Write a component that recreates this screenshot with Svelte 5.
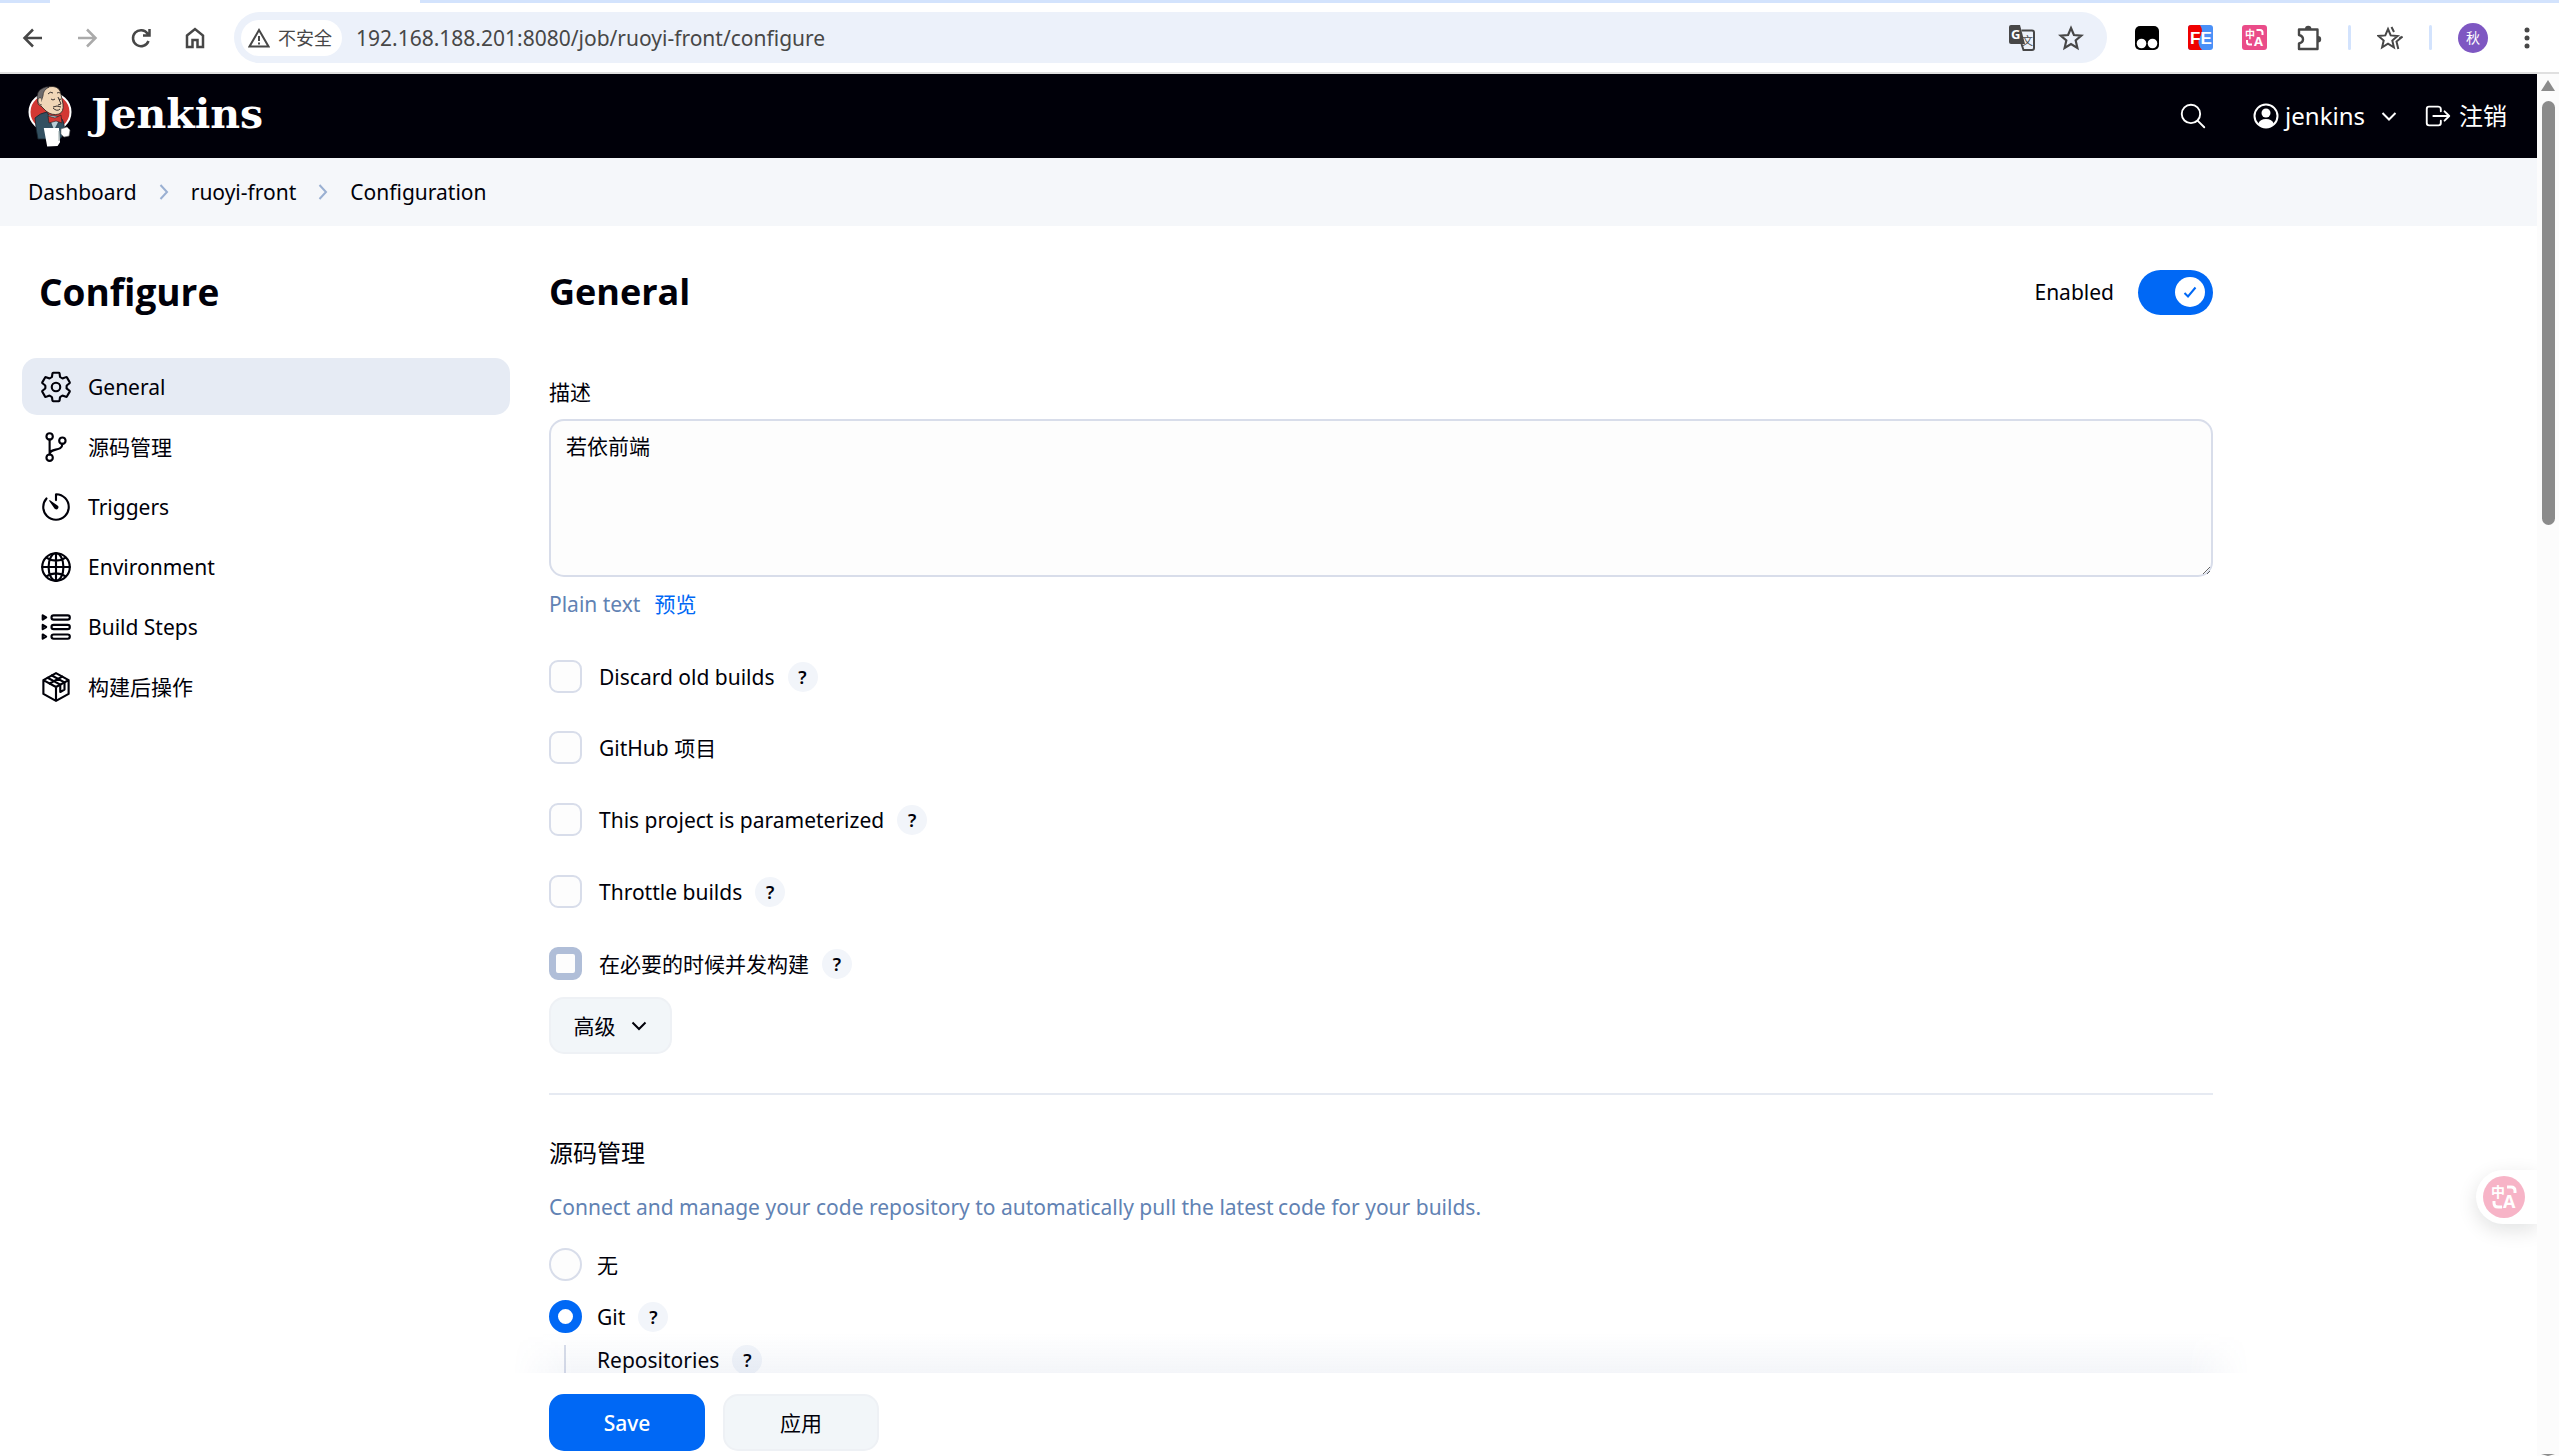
<script lang="ts">
	let url = '192.168.188.201:8080/job/ruoyi-front/configure';
	let description = '若依前端';
	let enabled = true;
	let scm = 'git';

	const crumbs = ['Dashboard', 'ruoyi-front', 'Configuration'];

	const tasks = [
		{ name: 'General', icon: 'settings', active: true },
		{ name: '源码管理', icon: 'branch' },
		{ name: 'Triggers', icon: 'timer' },
		{ name: 'Environment', icon: 'globe' },
		{ name: 'Build Steps', icon: 'steps' },
		{ name: '构建后操作', icon: 'cube' }
	];

	const options = [
		{ id: 'discard', label: 'Discard old builds', help: true },
		{ id: 'github', label: 'GitHub 项目' },
		{ id: 'parameterized', label: 'This project is parameterized', help: true },
		{ id: 'throttle', label: 'Throttle builds', help: true },
		{ id: 'concurrent', label: '在必要的时候并发构建', help: true, pressed: true }
	];
</script>

<div class="window">
	<div class="tab-strip"><div class="tab"></div></div>

	<div class="toolbar">
		<div class="nav-buttons">
			<button aria-label="Back">
				<svg width="24" height="24" viewBox="0 0 24 24"><path d="M21 12H4M12 3.500L3.500 12l8.500 8.500" /></svg>
			</button>
			<button aria-label="Forward" class="faded">
				<svg width="24" height="24" viewBox="0 0 24 24"><path d="M3 12h17M12 3.500l8.500 8.500-8.500 8.500" /></svg>
			</button>
			<button aria-label="Reload">
				<svg width="24" height="24" viewBox="0 0 24 24"><path d="M19.500 15A8 8 0 1 1 18.500 7.500L20 9M20.500 3v6.500H14" /></svg>
			</button>
			<button aria-label="Home">
				<svg width="24" height="24" viewBox="0 0 24 24"><path d="M4 9.500L12 3l8 6.500V21h-5.500v-7h-5v7H4z" /></svg>
			</button>
		</div>

		<div class="omnibox">
			<button class="chip">
				<svg width="22" height="22" viewBox="0 0 22 22"><path d="M11 3L1.500 19.500h19zM11 9v5M11 15.500v2" /></svg>
				不安全
			</button>
			<input class="url" aria-label="Address" bind:value={url} />
			<button aria-label="Translate">
				<svg class="solid" width="26" height="26" viewBox="0 0 26 26">
					<path d="M2 0h9l5 19H2a2 2 0 0 1-2-2V2a2 2 0 0 1 2-2z" />
					<path class="line" d="M12.500 5.500H23a2 2 0 0 1 2 2V23a2 2 0 0 1-2 2h-8.500l-2-6" />
					<text x="2" y="14" class="g">G</text>
					<text x="13" y="20" class="wen">文</text>
				</svg>
			</button>
			<button aria-label="Bookmark">
				<svg width="26" height="26" viewBox="0 0 24 24"><path d="M12 2.800l2.700 6.400 6.900.6-5.300 4.500 1.600 6.800-5.900-3.600-5.900 3.600 1.600-6.800L2.400 9.800l6.900-.6z" /></svg>
			</button>
		</div>

		<div class="extensions">
			<button aria-label="Tampermonkey">
				<svg class="plain" width="24" height="24" viewBox="0 0 24 24">
					<rect width="24" height="24" rx="5" fill="#000" />
					<circle cx="6.500" cy="17.500" r="4.800" fill="#fff" />
					<circle cx="17.500" cy="17.500" r="4.800" fill="#fff" />
				</svg>
			</button>
			<button aria-label="FeHelper">
				<svg class="plain" width="25" height="25" viewBox="0 0 25 25">
					<rect width="25" height="25" rx="3" fill="#4a90f7" />
					<path d="M3 0h9q4 6 0 12t2 13H3a3 3 0 0 1-3-3V3a3 3 0 0 1 3-3z" fill="#f00000" />
					<text x="2" y="19" class="fe">FE</text>
				</svg>
			</button>
			<button aria-label="Immersive translate">
				<svg class="plain" width="25" height="25" viewBox="0 0 25 25">
					<rect width="25" height="25" rx="3" fill="#ea4c89" />
					<text x="3" y="13" class="zhong">中</text>
					<text x="12" y="21" class="latin">A</text>
					<path d="M14.500 5H18q2.500 0 2.500 2.500V10M5 15v2q0 2.500 2.500 2.500H10" fill="none" stroke="#fff" stroke-width="2" />
				</svg>
			</button>
			<button aria-label="Extensions">
				<svg width="26" height="26" viewBox="0 0 26 26">
					<path d="M3 4.500h18.500V24H3v-5.500q4-1 4-4.250t-4-4.250z" stroke-linejoin="round" stroke-width="2.400" />
					<path class="fill" d="M9 4a3.200 3.200 0 0 1 6.400 0zM22 11a3.200 3.200 0 0 1 0 6.400z" />
				</svg>
			</button>
		</div>
		<div class="profile">
			<span class="separator"></span>
			<button aria-label="Favourites">
				<svg width="26" height="26" viewBox="0 0 26 26">
					<path d="M11 4l2.700 6.400 6.900.6-5.300 4.500 1.600 6.800-5.900-3.600-5.900 3.600 1.600-6.800L1.400 11l6.900-.6z" />
					<path d="M14.500 2l2.500 5M25.500 11.500l-6 5 1.800 7.500M24 12l-1.500 1" />
				</svg>
			</button>
			<span class="separator"></span>
			<button class="avatar" aria-label="Profile">秋</button>
			<button aria-label="Menu">
				<svg width="26" height="26" viewBox="0 0 26 26">
					<g class="fill"><circle cx="13" cy="5" r="2.500" /><circle cx="13" cy="13" r="2.500" /><circle cx="13" cy="21" r="2.500" /></g>
				</svg>
			</button>
		</div>
	</div>

	<div class="viewport">
		<div class="page">
			<header class="page-header">
				<a class="logo" href="/">
					<svg width="44" height="62" viewBox="0 0 44 62">
						<ellipse cx="22" cy="27" rx="20.500" ry="19" fill="#d33833" />
						<path d="M7 33q5-5 12-6l4 8 8-3q4 1 5 8l1 8-5 6H10q-2-9-3-21z" fill="#335061" stroke="#16242d" stroke-width=".8" />
						<path d="M20 30l6 16 7-14z" fill="#b9cfd8" stroke="#16242d" stroke-width=".6" />
						<path d="M14 7Q18 1 25 1.500q7 .5 8 8L35 19q1 8-4 10-7 2-13-3l-5-5q-4-1-3-6z" fill="#f0d6b7" stroke="#231f20" stroke-width=".8" />
						<path d="M10 17Q7 6 15 3q4-2 6-1-6 3-6 9l-2 6z" fill="#6d6b6d" stroke="#231f20" stroke-width=".6" />
						<path d="M13 13q-3-1-3 3t4 4" fill="#f0d6b7" stroke="#231f20" stroke-width=".6" />
						<path d="M20 9q2-3 5-1M29 8q2-1 3 0M23 14q2 2 4 0M31 14q1 1 2 0M30 12l3 7-3 1M25 22q4-2 8 0M25 23q4 4 7 1" fill="none" stroke="#231f20" stroke-width=".9" />
						<path d="M20 31l7 2 6-3 1 8-6-2-7 2z" fill="#d33833" stroke="#231f20" stroke-width=".6" />
						<path d="M33 44l6-2 3 3-1 6-5 1-3-3z" fill="#fff" stroke="#777" stroke-width=".6" />
						<path d="M17 44h13l1 13-2 3-9 .5z" fill="#fff" />
						<path d="M31 46v10" stroke="#9aa" stroke-width="1" />
					</svg>
					<span>Jenkins</span>
				</a>
				<button aria-label="Search" class="search">
					<svg width="30" height="30" viewBox="0 0 512 512"><path d="M221.090 64a157.090 157.090 0 10157.090 157.090A157.100 157.100 0 00221.090 64z" /><path d="M338.290 338.290L448 448" /></svg>
				</button>
				<a class="user" href="/user">
					<svg width="26" height="26" viewBox="0 0 26 26">
						<circle cx="13" cy="13" r="11.500" />
						<circle cx="13" cy="10" r="4.500" class="person" />
						<path d="M5 21q2-5 8-5t8 5q-3 3.500-8 3.500T5 21z" class="person" />
					</svg>
					jenkins
					<svg class="caret" width="16" height="16" viewBox="0 0 16 16"><path d="M1.500 5L8 11.500 14.500 5" /></svg>
				</a>
				<a class="logout" href="/logout">
					<svg width="30" height="30" viewBox="0 0 512 512"><path d="M304 336v40a40 40 0 01-40 40H104a40 40 0 01-40-40V136a40 40 0 0140-40h152c22.090 0 48 17.910 48 40v40M368 336l80-80-80-80M176 256h256" /></svg>
					注销
				</a>
			</header>

			<nav class="breadcrumbs">
				{#each crumbs as crumb, i}
					{#if i > 0}
						<svg width="10" height="18" viewBox="0 0 10 18"><path d="M1.500 2l6.500 7-6.500 7" /></svg>
					{/if}
					<a href="#{crumb}">{crumb}</a>
				{/each}
			</nav>

			<div class="body">
				<aside>
					<h1>Configure</h1>
					<nav class="tasks">
						{#each tasks as task}
							<a href="#{task.icon}" class="task" class:active={task.active}>
								<svg width="34" height="34" viewBox="0 0 512 512">
									{#if task.icon === 'settings'}
										<circle cx="256" cy="256" r="64" />
										<path d="M416.390 256a154.340 154.340 0 01-1.530 20.790l45.210 35.460a10.810 10.810 0 012.450 13.750l-42.770 74a10.810 10.810 0 01-13.140 4.590l-44.900-18.080a16.110 16.110 0 00-15.170 1.750A164.480 164.480 0 01325 400.800a15.940 15.940 0 00-8.820 12.140l-6.730 47.890a11.080 11.080 0 01-10.680 9.170h-85.540a11.110 11.110 0 01-10.690-8.870l-6.720-47.820a16.070 16.070 0 00-9-12.220 155.300 155.300 0 01-21.460-12.570 16 16 0 00-15.110-1.710l-44.890 18.070a10.810 10.810 0 01-13.140-4.580l-42.770-74a10.800 10.800 0 012.450-13.750l38.210-30a16.050 16.050 0 006-14.080c-.36-4.170-.58-8.330-.58-12.500s.21-8.270.58-12.350a16 16 0 00-6.070-13.940l-38.190-30A10.810 10.810 0 0149.480 186l42.770-74a10.810 10.810 0 0113.140-4.590l44.900 18.080a16.110 16.110 0 0015.170-1.750A164.480 164.480 0 01187 111.200a15.940 15.940 0 008.820-12.140l6.730-47.890A11.080 11.080 0 01213.230 42h85.540a11.110 11.110 0 0110.690 8.870l6.720 47.820a16.070 16.070 0 009 12.220 155.300 155.300 0 0121.460 12.570 16 16 0 0015.110 1.710l44.890-18.070a10.810 10.810 0 0113.140 4.580l42.770 74a10.800 10.800 0 01-2.450 13.750l-38.210 30a16.050 16.050 0 00-6.050 14.080c.33 4.140.55 8.300.55 12.470z" />
									{:else if task.icon === 'branch'}
										<circle cx="160" cy="96" r="48" />
										<circle cx="160" cy="416" r="48" />
										<circle cx="352" cy="160" r="48" />
										<path d="M160 368V144M352 208c0 128-192 48-192 160" />
									{:else if task.icon === 'timer'}
										<path d="M112.910 128A191.850 191.850 0 0064 254c-1.180 106.350 85.650 193.800 192 194 106.200.2 192-85.830 192-192 0-104.540-83.550-189.610-187.500-192a4.360 4.360 0 00-4.500 4.370V152" />
										<path class="hand" d="M233.380 278.630l-79-113a8.130 8.130 0 0111.320-11.320l113 79a32.500 32.500 0 01-37.250 53.260 33.210 33.210 0 01-8.070-7.940z" />
									{:else if task.icon === 'globe'}
										<circle cx="256" cy="256" r="208" />
										<ellipse cx="256" cy="256" rx="112" ry="208" />
										<path d="M117.330 117.330c38.240 27.150 86.380 43.340 138.670 43.340s100.430-16.190 138.670-43.340M394.670 394.670c-38.240-27.150-86.380-43.340-138.670-43.340s-100.430 16.190-138.670 43.340M256 48v416M464 256H48" />
									{:else if task.icon === 'steps'}
										<rect x="188" y="80" width="276" height="64" rx="32" />
										<rect x="188" y="224" width="276" height="64" rx="32" />
										<rect x="188" y="368" width="276" height="64" rx="32" />
										<path d="M56 80l52 32-52 32zM56 224l52 32-52 32zM56 368l52 32-52 32z" />
									{:else}
										<path d="M256 48l190 104v208L256 464 66 360V152zM66 152l190 104 190-104M256 256v208" />
										<path d="M130 117l190 104v110l64-36V186L194 82M161 204l190-104" />
									{/if}
								</svg>
								{task.name}
							</a>
						{/each}
					</nav>
				</aside>

				<main>
					<div class="scroll">
						<div class="title-row">
							<h2>General</h2>
							<label class="toggle">
								Enabled
								<input type="checkbox" bind:checked={enabled} />
								<span class="track">
									<span class="knob">
										<svg width="16" height="16" viewBox="0 0 16 16"><path d="M2.500 9l3.500 3.500 7.500-9" /></svg>
									</span>
								</span>
							</label>
						</div>

						<label class="field-label" for="description">描述</label>
						<textarea id="description" bind:value={description}></textarea>
						<div class="preview">
							<span>Plain text</span>
							<a href="#preview">预览</a>
						</div>

						<div class="options">
							{#each options as option}
								<div class="option">
									<input type="checkbox" id={option.id} class:pressed={option.pressed} />
									<label for={option.id}>{option.label}</label>
									{#if option.help}
										<button class="help" aria-label="Help for {option.label}">?</button>
									{/if}
								</div>
							{/each}
						</div>

						<button class="button advanced">
							高级
							<svg width="18" height="18" viewBox="0 0 18 18"><path d="M2.500 5.500L9 12l6.500-6.500" /></svg>
						</button>

						<hr />

						<h3>源码管理</h3>
						<p class="section-text">Connect and manage your code repository to automatically pull the latest code for your builds.</p>

						<div class="radio">
							<input type="radio" id="scm-none" value="none" bind:group={scm} />
							<label for="scm-none">无</label>
						</div>
						<div class="radio">
							<input type="radio" id="scm-git" value="git" bind:group={scm} />
							<label for="scm-git">Git</label>
							<button class="help" aria-label="Help for Git">?</button>
						</div>
						<div class="nested">
							Repositories
							<button class="help" aria-label="Help for Repositories">?</button>
						</div>
					</div>

					<div class="bottom-bar">
						<button class="button primary">Save</button>
						<button class="button">应用</button>
					</div>
				</main>
			</div>

			<button class="translate-float" aria-label="Translate page">
				<svg width="42" height="42" viewBox="0 0 42 42">
					<circle cx="21" cy="21" r="21" />
					<text x="8" y="21" class="zhong">中</text>
					<text x="20" y="32" class="latin">A</text>
					<path d="M24 11h4q4 0 4 4v2M11 25v2q0 4 4 4h4" />
				</svg>
			</button>
		</div>

		<div class="scrollbar">
			<span class="arrow"></span>
			<span class="thumb"></span>
			<span class="arrow down"></span>
		</div>
	</div>
</div>

<style>
	:global(body) {
		background: #fff;
	}

	.window {
		display: flex;
		flex-direction: column;
		height: 100vh;
		overflow: hidden;
		color: #000009;
		font-family: 'Noto Sans', 'Noto Sans CJK SC', sans-serif;
		font-size: 21px;
		line-height: 30px;
	}

	.window * {
		box-sizing: border-box;
	}

	button,
	input,
	textarea {
		margin: 0;
		padding: 0;
		border: 0;
		background: none;
		color: inherit;
		font: inherit;
	}

	button {
		display: flex;
		align-items: center;
		justify-content: center;
		flex-shrink: 0;
	}

	a {
		color: inherit;
		text-decoration: none;
	}

	svg {
		display: block;
		flex-shrink: 0;
		fill: none;
		stroke: currentColor;
		stroke-width: 2;
	}

	/* browser chrome */
	.tab-strip {
		height: 3px;
		padding-left: 50px;
		background: #d3e3fd;
		flex-shrink: 0;
	}

	.tab {
		width: 370px;
		height: 3px;
		background: #fff;
	}

	.toolbar {
		display: flex;
		align-items: center;
		flex-shrink: 0;
		height: 71px;
		padding: 0 19px 0 21px;
		border-bottom: 2px solid #e0e0e0;
		background: #fff;
		color: #474747;
	}

	.nav-buttons {
		display: flex;
		gap: 30px;
		margin-right: 27px;
	}

	.nav-buttons svg {
		stroke-width: 2.5;
	}

	.faded {
		color: #aaa;
	}

	.omnibox {
		display: flex;
		flex: 1;
		align-items: center;
		gap: 23px;
		height: 51px;
		padding: 0 23px 0 7px;
		border-radius: 26px;
		background: #ecf1fa;
	}

	.chip {
		gap: 8px;
		height: 36px;
		padding: 0 10px 0 7px;
		border-radius: 18px;
		background: #fff;
		font-size: 18px;
	}

	.url {
		flex: 1;
		margin-left: -9px;
	}

	.solid {
		fill: #474747;
		stroke: none;
	}

	.solid .line {
		fill: none;
		stroke: #474747;
		stroke-width: 2;
	}

	.g {
		fill: #fff;
		font: bold 13px 'Open Sans', sans-serif;
	}

	.wen {
		font: 11px 'Noto Sans CJK SC', sans-serif;
	}

	.extensions,
	.profile {
		display: flex;
		align-items: center;
	}

	.extensions {
		gap: 29px;
		margin: 0 26px 0 28px;
	}

	.profile {
		gap: 26px;
	}

	.plain {
		stroke: none;
	}

	.fe {
		fill: #fff;
		font: bold 17px 'Liberation Sans', sans-serif;
	}

	.zhong {
		fill: #fff;
		font: bold 10px 'Noto Sans CJK SC', sans-serif;
	}

	.latin {
		fill: #fff;
		font: bold 13px 'Open Sans', sans-serif;
	}

	.fill {
		fill: currentColor;
		stroke: none;
	}

	.separator {
		width: 3px;
		height: 25px;
		border-radius: 2px;
		background: #d3e3fd;
	}

	.avatar {
		width: 30px;
		height: 30px;
		border-radius: 50%;
		background: #7e57c2;
		color: #fff;
		font-size: 14px;
	}

	/* page */
	.viewport {
		display: flex;
		flex: 1;
		min-height: 0;
	}

	.page {
		position: relative;
		display: flex;
		flex: 1;
		flex-direction: column;
		min-width: 0;
		overflow: hidden;
	}

	.page-header {
		display: flex;
		align-items: center;
		flex-shrink: 0;
		height: 84px;
		padding: 0 30px 0 28px;
		background: #000009;
		color: #fff;
		font-size: 24px;
	}

	.logo {
		display: flex;
		align-items: center;
		gap: 19px;
		margin-right: auto;
		font: bold 41px 'DejaVu Serif', serif;
	}

	.logo span {
		padding-bottom: 4px;
	}

	.search svg,
	.logout svg {
		stroke-width: 32;
		stroke-linecap: round;
		stroke-linejoin: round;
	}

	.user {
		display: flex;
		align-items: center;
		gap: 6px;
		margin: 0 26px 0 45px;
	}

	.person {
		fill: #fff;
		stroke: none;
	}

	.caret {
		margin-left: 10px;
	}

	.logout {
		display: flex;
		align-items: center;
		gap: 6px;
	}

	.breadcrumbs {
		display: flex;
		align-items: center;
		gap: 22px;
		flex-shrink: 0;
		height: 68px;
		padding-left: 28px;
		background: #f5f7fa;
	}

	.breadcrumbs svg {
		color: #9ab0d2;
	}

	.body {
		display: grid;
		grid-template-columns: 488px minmax(0, 1665px);
		gap: 39px;
		flex: 1;
		min-height: 0;
		padding-left: 22px;
	}

	aside {
		padding-top: 39px;
	}

	h1,
	h2,
	h3,
	p {
		margin: 0;
	}

	h1,
	h2 {
		font-family: 'Open Sans', sans-serif;
		font-size: 36px;
		font-weight: 700;
		line-height: 54px;
	}

	h1 {
		padding-left: 17px;
		font-size: 37px;
	}

	.tasks {
		display: flex;
		flex-direction: column;
		gap: 3px;
		margin-top: 39px;
	}

	.task {
		display: flex;
		align-items: center;
		gap: 15px;
		height: 57px;
		padding-left: 17px;
		border-radius: 15px;
	}

	.task.active {
		background: #e6ebf4;
	}

	.task svg {
		stroke-width: 32;
		stroke-linecap: round;
		stroke-linejoin: round;
	}

	.hand {
		fill: currentColor;
		stroke: none;
	}

	main {
		display: flex;
		flex-direction: column;
		min-height: 0;
	}

	.scroll {
		flex: 1;
		min-height: 0;
		overflow: hidden;
		padding-top: 39px;
	}

	.title-row {
		display: flex;
		align-items: center;
		justify-content: space-between;
	}

	.toggle {
		display: flex;
		align-items: center;
	}

	.toggle input {
		position: absolute;
		opacity: 0;
	}

	.track {
		display: flex;
		align-items: center;
		justify-content: flex-start;
		width: 75px;
		height: 45px;
		margin-left: 24px;
		padding: 0 8px;
		border-radius: 23px;
		background: #b0bed8;
	}

	.toggle input:checked + .track {
		justify-content: flex-end;
		background: #0068f5;
	}

	.knob {
		display: flex;
		align-items: center;
		justify-content: center;
		width: 30px;
		height: 30px;
		border-radius: 50%;
		background: #fff;
		color: #0068f5;
	}

	.field-label {
		display: block;
		margin: 58px 0 12px;
	}

	textarea {
		display: block;
		width: 100%;
		height: 158px;
		padding: 10px 15px;
		border: 2px solid #d8ddea;
		border-radius: 15px;
		background: #fdfdfd;
		resize: vertical;
	}

	.preview {
		display: flex;
		gap: 14px;
		margin-top: 12px;
		color: #6182b3;
	}

	.preview a {
		color: #0068f5;
	}

	.options {
		display: flex;
		flex-direction: column;
		gap: 39px;
		margin-top: 41px;
	}

	.option,
	.radio {
		display: flex;
		align-items: center;
		height: 33px;
	}

	.option input,
	.radio input {
		appearance: none;
		width: 33px;
		height: 33px;
		margin-right: 17px;
		border: 2px solid #d8ddea;
		border-radius: 9px;
		background: #fdfdfd;
	}

	.option .pressed {
		border: 7px solid #b0bed8;
	}

	.help {
		width: 30px;
		height: 30px;
		margin-left: 13px;
		border-radius: 50%;
		background: #f2f5fa;
		font-size: 18px;
		font-weight: 600;
	}

	.button {
		min-width: 156px;
		height: 57px;
		border: 2px solid #eef1f5;
		border-radius: 15px;
		background: #f2f6f9;
	}

	.advanced {
		gap: 14px;
		min-width: 123px;
		margin-top: 17px;
	}

	hr {
		height: 2px;
		margin: 39px 0 41px;
		border: 0;
		background: #e6eaf2;
	}

	h3 {
		font-size: 24px;
		font-weight: 400;
		line-height: 34px;
	}

	.section-text {
		margin: 22px 0 26px;
		color: #6182b3;
	}

	.radio {
		margin-bottom: 19px;
	}

	.radio input {
		margin-right: 15px;
		border-radius: 50%;
	}

	.radio input:checked {
		border: 9px solid #0068f5;
		background: #fff;
	}

	.nested {
		display: flex;
		height: 60px;
		margin: -7px 0 0 15px;
		padding-left: 31px;
		border-left: 2px solid #d8ddea;
	}

	.bottom-bar {
		position: relative;
		display: flex;
		gap: 18px;
		flex-shrink: 0;
		height: 83px;
		padding-top: 21px;
		background: #fff;
	}

	/* soft shadow over the scrolled content */
	.bottom-bar::before {
		position: absolute;
		right: -36px;
		bottom: 100%;
		left: -36px;
		height: 40px;
		background: linear-gradient(rgba(60, 90, 150, 0), rgba(60, 90, 150, 0.06));
		mask-image: linear-gradient(90deg, transparent, #000 60px, #000 calc(100% - 60px), transparent);
		pointer-events: none;
		content: '';
	}

	.primary {
		border-color: #0068f5;
		background: #0068f5;
		color: #fff;
		font-weight: 500;
	}

	.translate-float {
		position: absolute;
		right: 0;
		bottom: 232px;
		justify-content: flex-start;
		width: 61px;
		height: 54px;
		padding-left: 7px;
		border-radius: 27px 0 0 27px;
		background: #fff;
		box-shadow: 0 6px 20px rgba(0, 20, 20, 0.12);
	}

	.translate-float svg {
		stroke: none;
	}

	.translate-float circle {
		fill: #f7b4c7;
	}

	.translate-float path {
		stroke: #fff;
		stroke-width: 3;
	}

	.translate-float .zhong {
		font-size: 14px;
	}

	.translate-float .latin {
		font-size: 18px;
	}

	/* scrollbar */
	.scrollbar {
		display: flex;
		flex-direction: column;
		align-items: center;
		flex-shrink: 0;
		width: 22px;
		padding-top: 6px;
		background: #fcfcfc;
	}

	.arrow {
		width: 0;
		border: 7px solid transparent;
		border-top: 0;
		border-bottom: 11px solid #8b8b8b;
	}

	.thumb {
		width: 13px;
		height: 424px;
		margin-top: 10px;
		border-radius: 7px;
		background: #8b8b8b;
	}

	.arrow.down {
		margin-top: auto;
		border-top: 2px solid #8b8b8b;
		border-bottom: 0;
	}
</style>
